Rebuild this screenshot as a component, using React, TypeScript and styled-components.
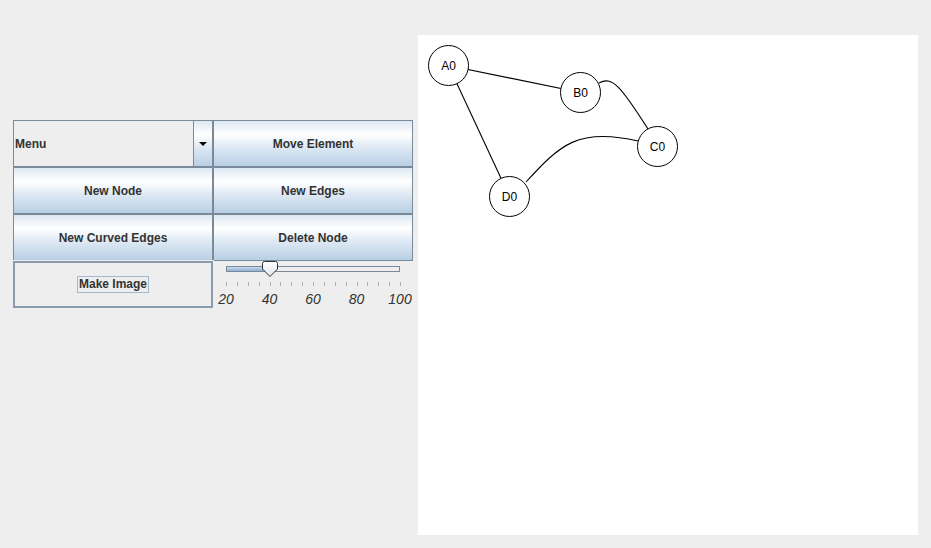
import React from 'react';
import styled, { createGlobalStyle } from 'styled-components';

const GlobalStyle = createGlobalStyle`
  html, body {
    margin: 0;
    padding: 0;
    background: #eeeeee;
  }
  body {
    font-family: "Liberation Sans", Arial, sans-serif;
  }
`;

// Metal "ocean" button gradient
const ocean = 'linear-gradient(to bottom, #dde8f3 0%, #ffffff 30%, #dde8f3 60%, #b8cfe5 100%)';

const Window = styled.div`
  box-sizing: border-box;
  display: flex;
  align-items: flex-start;
  gap: 5px;
  width: 931px;
  height: 548px;
  padding: 35px 0 0 13px;
  background: #eeeeee;
`;

const Controls = styled.div`
  margin-top: 85px;
  display: grid;
  grid-template-columns: repeat(2, 200px);
  grid-auto-rows: 47px;
`;

const ActionButton = styled.button`
  box-sizing: border-box;
  margin: 0;
  padding: 0;
  border: 1px solid #7a8a99;
  background: ${ocean};
  font: bold 12px "Liberation Sans", Arial, sans-serif;
  color: #333333;
  outline: none;
  cursor: pointer;
`;

const Combo = styled.div`
  box-sizing: border-box;
  display: flex;
  border: 1px solid #7a8a99;
  background: #eeeeee;
`;

const ComboText = styled.span`
  flex: 1;
  display: flex;
  align-items: center;
  padding-left: 1px;
  font: bold 12px "Liberation Sans", Arial, sans-serif;
  color: #333333;
`;

const ComboArrow = styled.span`
  width: 18px;
  display: flex;
  align-items: center;
  justify-content: center;
  border-left: 1px solid #7a8a99;
  background: ${ocean};

  &::after {
    content: '';
    border-left: 4px solid transparent;
    border-right: 4px solid transparent;
    border-top: 4px solid #000000;
  }
`;

const PlainButton = styled.button`
  box-sizing: border-box;
  margin: 0;
  padding: 0;
  display: flex;
  align-items: center;
  justify-content: center;
  border: 2px solid #8a9bb0;
  box-shadow: 0 0 0 1px #eeeeee;
  background: #eeeeee;
  outline: none;
  cursor: pointer;
`;

const FocusLabel = styled.span`
  padding: 0 1px;
  border: 1px solid #a3b8cc;
  font: bold 12px/15px "Liberation Sans", Arial, sans-serif;
  color: #333333;
`;

const SliderCell = styled.div`
  position: relative;
  padding: 5px 0 0 13px;
`;

const Track = styled.div`
  box-sizing: border-box;
  width: 174px;
  height: 6px;
  border: 1px solid #7a8a99;
  background: #eeeeee;
  display: flex;
`;

const TrackFill = styled.div`
  height: 100%;
  background: linear-gradient(to bottom, #c8daee, #8eaed3);
`;

const Thumb = styled.svg`
  position: absolute;
  top: 0;
  width: 16px;
  height: 16px;
`;

const Ticks = styled.div`
  display: flex;
  justify-content: space-between;
  width: 175px;
  height: 4px;
  margin-top: 10px;
`;

const Tick = styled.span`
  width: 1px;
  background: #b0b0b0;
`;

const Labels = styled.div`
  display: flex;
  justify-content: space-between;
  width: 174px;
  margin-top: 5px;
`;

const LabelSlot = styled.span`
  width: 0;
  display: flex;
  justify-content: center;
  font: italic 14px/16px "Liberation Sans", Arial, sans-serif;
  color: #333333;
  white-space: nowrap;
`;

const Canvas = styled.div`
  width: 500px;
  height: 500px;
  background: #ffffff;
`;

const GraphSvg = styled.svg`
  display: block;
  width: 500px;
  height: 500px;
`;

interface SliderProps {
  min: number;
  max: number;
  value: number;
  minorStep: number;
  majorStep: number;
}

const Slider: React.FC<SliderProps> = ({ min, max, value, minorStep, majorStep }) => {
  const frac = (value - min) / (max - min);
  const ticks: number[] = [];
  for (let v = min; v <= max; v += minorStep) ticks.push(v);
  const labels: number[] = [];
  for (let v = min; v <= max; v += majorStep) labels.push(v);

  return (
    <SliderCell>
      <Track>
        <TrackFill style={{ width: `${frac * 100}%` }} />
      </Track>
      <Thumb style={{ left: 13 + frac * 174 - 8 }} viewBox="0 0 16 16">
        <defs>
          <linearGradient id="thumbFill" x1="0" y1="0" x2="0" y2="1">
            <stop offset="0" stopColor="#ffffff" />
            <stop offset="1" stopColor="#dde8f3" />
          </linearGradient>
        </defs>
        <path
          d="M2.5 0.5 H13.5 Q15.5 0.5 15.5 2.5 V8 L8 15.5 L0.5 8 V2.5 Q0.5 0.5 2.5 0.5 Z"
          fill="url(#thumbFill)"
          stroke="#333333"
          strokeWidth="1"
        />
      </Thumb>
      <Ticks>
        {ticks.map((t) => (
          <Tick key={t} />
        ))}
      </Ticks>
      <Labels>
        {labels.map((l) => (
          <LabelSlot key={l}>{l}</LabelSlot>
        ))}
      </Labels>
    </SliderCell>
  );
};

const nodes = [
  { id: 'A0', x: 30.5, y: 30.5 },
  { id: 'B0', x: 162.5, y: 57.5 },
  { id: 'C0', x: 239.5, y: 111.5 },
  { id: 'D0', x: 91.5, y: 161.5 },
];

const Graph: React.FC = () => (
  <Canvas>
    <GraphSvg viewBox="0 0 500 500">
      <g fill="none" stroke="#000000" strokeWidth="1.1">
        <line x1={30.5} y1={30.5} x2={162.5} y2={57.5} />
        <line x1={30.5} y1={30.5} x2={91.5} y2={161.5} />
        <path d="M181 48 C194 41, 202 50, 230 94" />
        <path d="M108 147 C142 110, 160 92, 220 106" />
      </g>
      {nodes.map((n) => (
        <g key={n.id}>
          <circle cx={n.x} cy={n.y} r={20} fill="#ffffff" stroke="#000000" strokeWidth="1" />
          <text
            x={n.x}
            y={n.y + 4}
            textAnchor="middle"
            fontFamily="Liberation Sans, Arial, sans-serif"
            fontSize="12"
            fill="#000000"
          >
            {n.id}
          </text>
        </g>
      ))}
    </GraphSvg>
  </Canvas>
);

export default function App() {
  return (
    <>
      <GlobalStyle />
      <Window>
        <Controls>
          <Combo>
            <ComboText>Menu</ComboText>
            <ComboArrow />
          </Combo>
          <ActionButton>Move Element</ActionButton>
          <ActionButton>New Node</ActionButton>
          <ActionButton>New Edges</ActionButton>
          <ActionButton>New Curved Edges</ActionButton>
          <ActionButton>Delete Node</ActionButton>
          <PlainButton>
            <FocusLabel>Make Image</FocusLabel>
          </PlainButton>
          <Slider min={20} max={100} value={40} minorStep={5} majorStep={20} />
        </Controls>
        <Graph />
      </Window>
    </>
  );
}
